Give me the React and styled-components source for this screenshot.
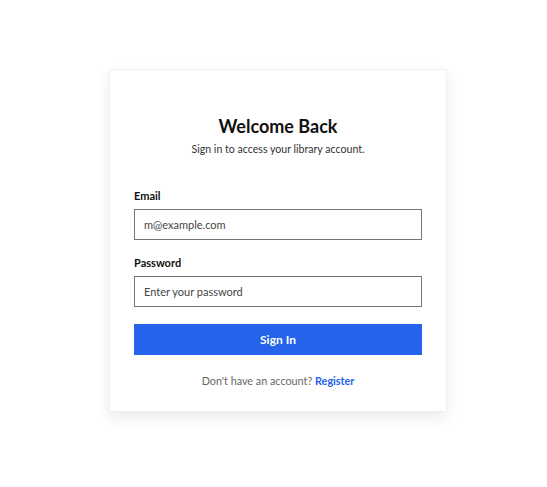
import React from 'react'
import styled, { createGlobalStyle } from 'styled-components'

const GlobalStyle = createGlobalStyle`
  html, body {
    margin: 0;
    padding: 0;
    background: #fff;
    font-family: Lato, "Open Sans", sans-serif;
  }
`

const Page = styled.div`
  min-height: 487px;
  display: flex;
  align-items: center;
  justify-content: center;
  padding-left: 9px;
  padding-bottom: 6px;
  box-sizing: border-box;
`

const Card = styled.form`
  width: 338px;
  box-sizing: border-box;
  background: #fff;
  border: 1px solid #f0f0f0;
  box-shadow: 0 6px 14px rgba(0, 0, 0, 0.08);
  padding: 45px 24px 24px;
  display: flex;
  flex-direction: column;
`

const Title = styled.h2`
  margin: 0;
  text-align: center;
  font-size: 18px;
  font-weight: 700;
  color: #111;
`

const Subtitle = styled.p`
  margin: 6px 0 0;
  text-align: center;
  font-size: 10.6px;
  color: #333;
`

const Field = styled.div`
  display: flex;
  flex-direction: column;
  margin-top: ${({ first }) => (first ? '34px' : '16px')};
`

const Label = styled.label`
  font-size: 11px;
  font-weight: 700;
  color: #111;
  margin-bottom: 7px;
`

const Input = styled.input`
  height: 31px;
  box-sizing: border-box;
  border: 1px solid #767676;
  padding: 0 9px;
  font-family: inherit;
  font-size: 11px;
  color: #222;
  outline: none;
  &::placeholder {
    color: #444;
  }
`

const Button = styled.button`
  margin-top: 17px;
  height: 31px;
  border: none;
  background: #2563eb;
  color: #fff;
  font-family: inherit;
  font-size: 12px;
  font-weight: 700;
  cursor: pointer;
`

const Footer = styled.p`
  margin: 19px 0 0;
  text-align: center;
  font-size: 10.8px;
  color: #666;
`

const Link = styled.a`
  color: #2563eb;
  font-weight: 700;
  text-decoration: none;
`

export default function App() {
  return (
    <>
      <GlobalStyle />
      <Page>
        <Card onSubmit={(e) => e.preventDefault()}>
          <Title>Welcome Back</Title>
          <Subtitle>Sign in to access your library account.</Subtitle>
          <Field first>
            <Label htmlFor="email">Email</Label>
            <Input id="email" type="email" placeholder="m@example.com" />
          </Field>
          <Field>
            <Label htmlFor="password">Password</Label>
            <Input id="password" type="password" placeholder="Enter your password" />
          </Field>
          <Button type="submit">Sign In</Button>
          <Footer>
            Don't have an account? <Link href="#">Register</Link>
          </Footer>
        </Card>
      </Page>
    </>
  )
}
